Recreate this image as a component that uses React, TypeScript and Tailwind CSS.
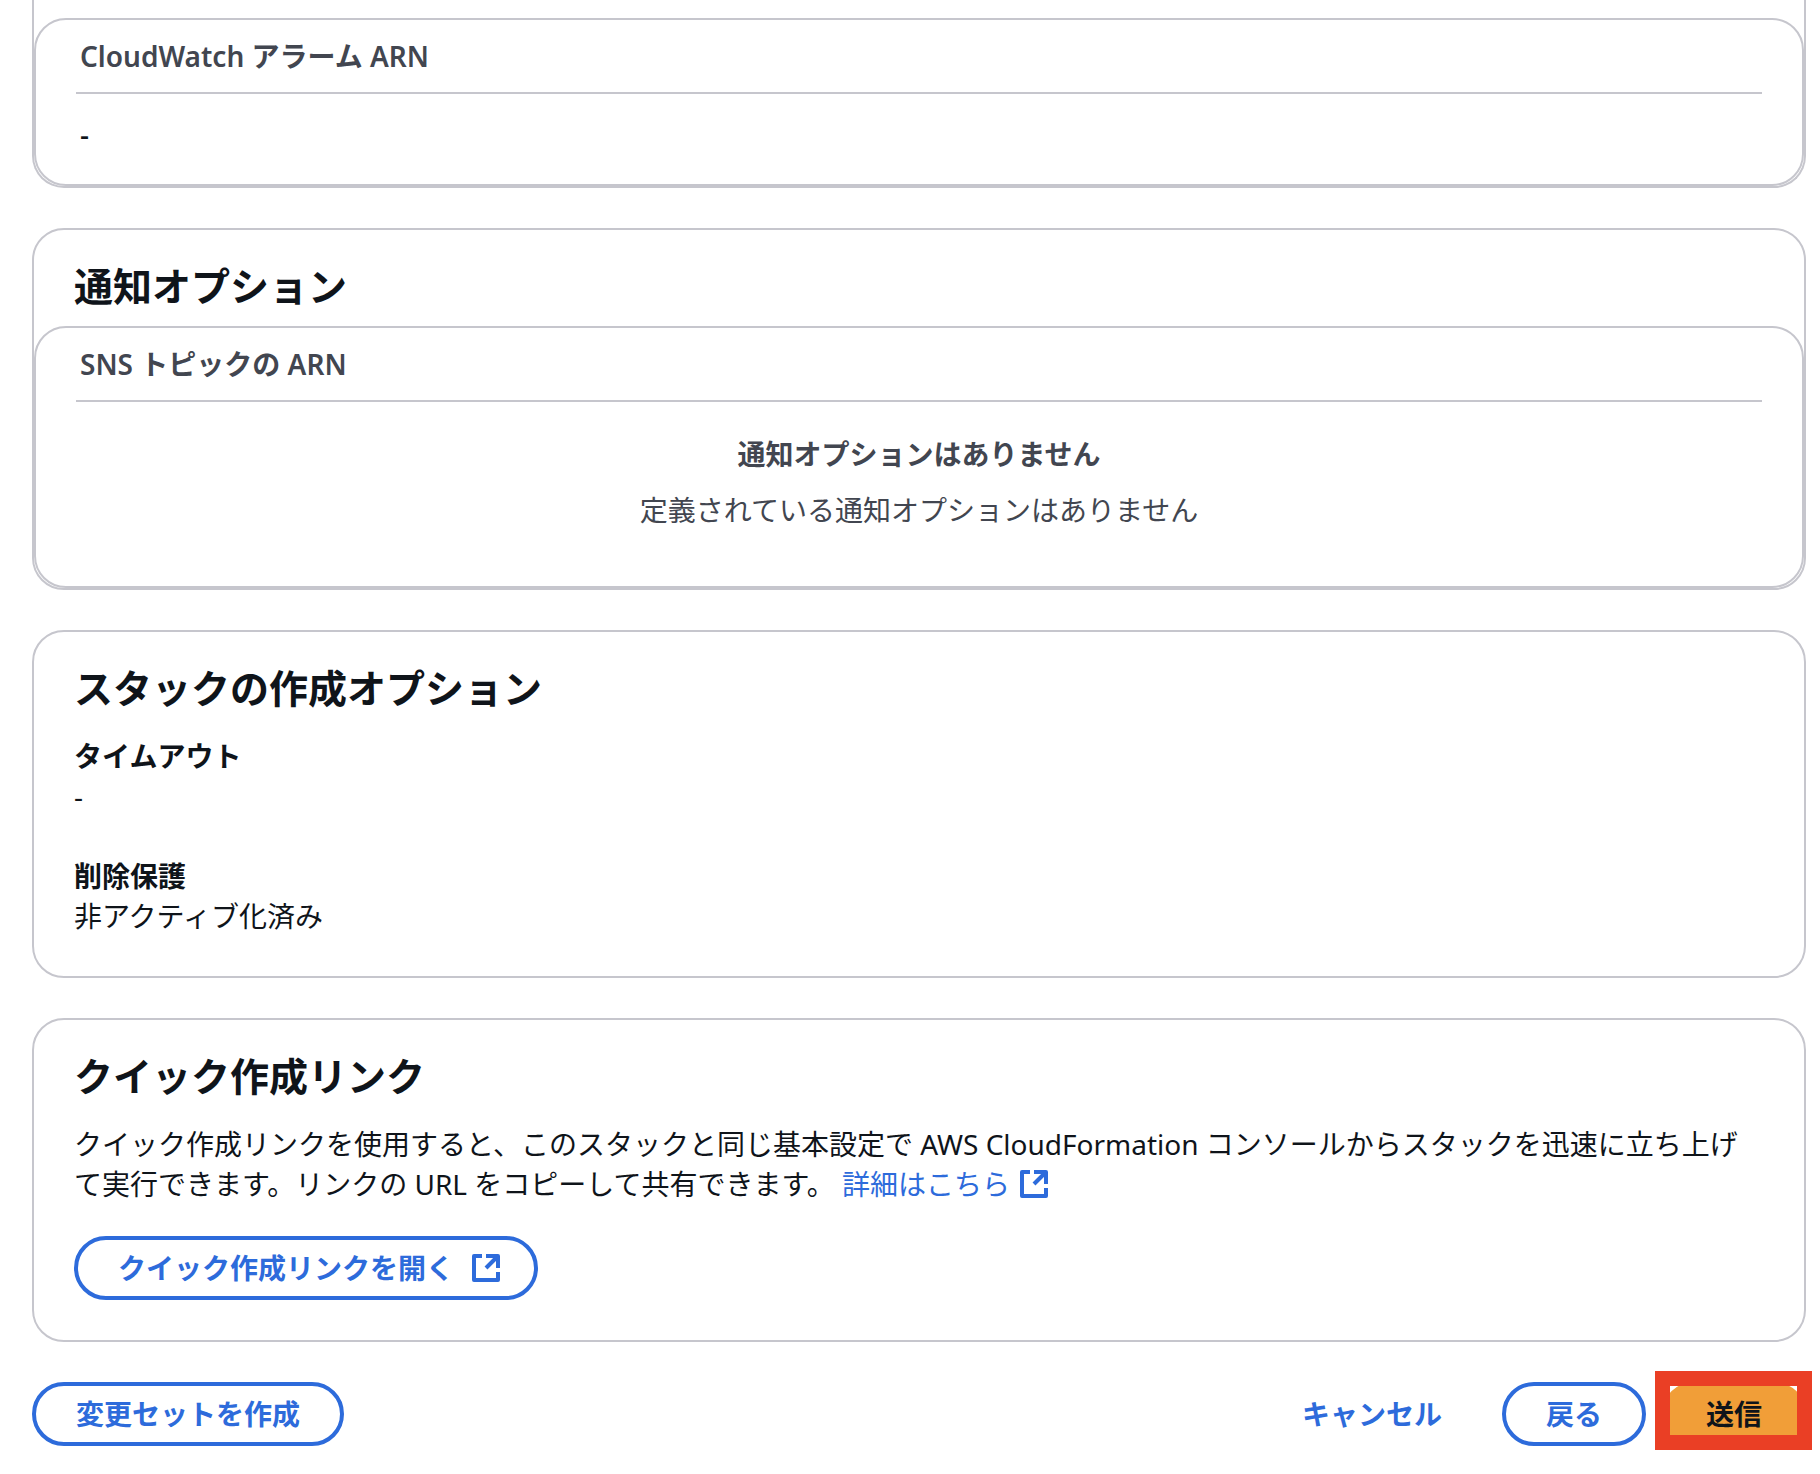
import type { ReactNode } from 'react';
import clsx from 'clsx';

function ExternalIcon() {
  return (
    <svg
      viewBox="0 0 32 32"
      className="size-8 shrink-0"
      fill="none"
      stroke="currentColor"
      strokeWidth="4"
      strokeLinejoin="round"
      aria-hidden="true"
    >
      <path d="M12 4H4v24h24v-8" />
      <path d="M16 4h12v12" />
      <path d="M28 4 16 16" />
    </svg>
  );
}

function Card({ title, children }: { title: string; children: ReactNode }) {
  return (
    <section className="rounded-[32px] border-2 border-[#c6c6cd]">
      <h2 className="px-10 pt-8 text-[39px] leading-12 font-semibold">{title}</h2>
      {children}
    </section>
  );
}

// Table with its own rounded frame, nested flush inside a card
function ArnTable({ header, children }: { header: string; children: ReactNode }) {
  return (
    <div className="rounded-[32px] border-2 border-[#c6c6cd] px-10">
      <table className="w-full border-separate border-spacing-0">
        <thead>
          <tr>
            <th
              scope="col"
              className="border-b-2 border-[#c6c6cd] px-1 py-4 text-left font-semibold text-[#424650]"
            >
              {header}
            </th>
          </tr>
        </thead>
        <tbody>
          <tr>{children}</tr>
        </tbody>
      </table>
    </div>
  );
}

function Button({
  variant = 'normal',
  icon,
  children,
}: {
  variant?: 'normal' | 'link' | 'primary';
  icon?: ReactNode;
  children: ReactNode;
}) {
  return (
    <button
      type="button"
      className={clsx(
        'flex h-16 items-center gap-4 rounded-full border-4 pl-10 font-semibold whitespace-nowrap',
        icon ? 'pr-8' : 'pr-10',
        variant === 'normal' && 'border-[#2d6bdb] text-[#2d6bdb]',
        variant === 'link' && 'border-transparent text-[#2d6bdb]',
        variant === 'primary' && 'border-[#f19e38] bg-[#f19e38] text-[#0f141a]'
      )}
    >
      {children}
      {icon}
    </button>
  );
}

const STACK_OPTIONS = [
  { label: 'タイムアウト', value: '-' },
  { label: '削除保護', value: '非アクティブ化済み' },
];

export default function App() {
  return (
    <main
      lang="ja"
      className="flex flex-col gap-10 bg-white pr-[14px] pb-7 pl-8 font-['Noto_Sans','Noto_Sans_CJK_JP',sans-serif] text-[28px] leading-10 text-[#0f141a]"
    >
      {/* Rollback configuration, scrolled past its header */}
      <section className="rounded-b-[32px] border-2 border-t-0 border-[#c6c6cd] pt-[18px]">
        <ArnTable header="CloudWatch アラーム ARN">
          <td className="px-1 pt-5 pb-[30px] font-medium">-</td>
        </ArnTable>
      </section>

      <Card title="通知オプション">
        <div className="pt-4">
          <ArnTable header="SNS トピックの ARN">
            <td className="pt-8 pb-14 text-center text-[#424650]">
              <p className="mb-4 font-semibold">通知オプションはありません</p>
              <p>定義されている通知オプションはありません</p>
            </td>
          </ArnTable>
        </div>
      </Card>

      <Card title="スタックの作成オプション">
        <dl className="flex flex-col gap-10 px-10 pt-6 pb-10">
          {STACK_OPTIONS.map((option) => (
            <div key={option.label}>
              <dt className="font-semibold">{option.label}</dt>
              <dd>{option.value}</dd>
            </div>
          ))}
        </dl>
      </Card>

      <Card title="クイック作成リンク">
        <div className="flex flex-col items-start gap-8 px-10 pt-6 pb-10">
          <p>
            クイック作成リンクを使用すると、このスタックと同じ基本設定で AWS CloudFormation
            コンソールからスタックを迅速に立ち上げて実行できます。リンクの URL
            をコピーして共有できます。{' '}
            <a href="#" className="inline-flex items-center gap-2 align-top text-[#2d6bdb]">
              詳細はこちら
              <ExternalIcon />
            </a>
          </p>
          <Button icon={<ExternalIcon />}>クイック作成リンクを開く</Button>
        </div>
      </Card>

      {/* Wizard actions */}
      <div className="flex items-center justify-between">
        <Button>変更セットを作成</Button>
        <div className="flex gap-4">
          <Button variant="link">キャンセル</Button>
          <Button>戻る</Button>
          <div className="relative">
            <Button variant="primary">送信</Button>
            {/* Highlight frame around the submit button */}
            <div className="pointer-events-none absolute -top-[11px] -right-[6px] -bottom-1 -left-[7px] border-[15px] border-[#ea3f25]" />
          </div>
        </div>
      </div>
    </main>
  );
}
